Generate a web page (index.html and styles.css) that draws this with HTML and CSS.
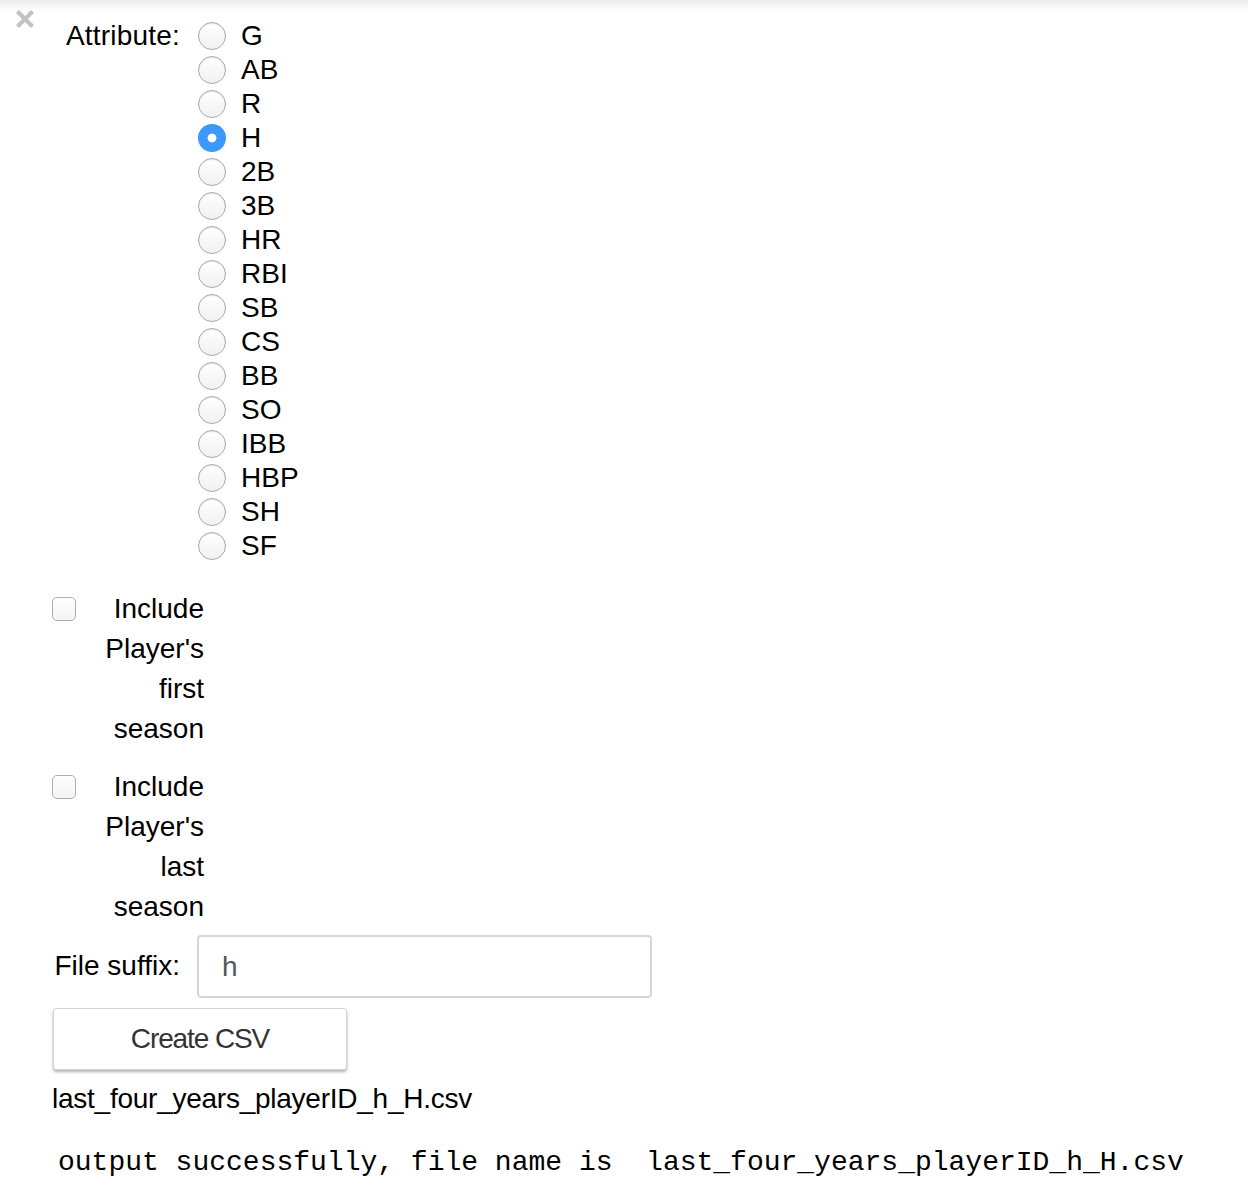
FILE: index.html
```html
<!DOCTYPE html>
<html>
<head>
<meta charset="utf-8">
<link rel="stylesheet" href="styles.css">
</head>
<body>
<div class="page">
  <div class="close-col">
    <svg class="close" width="20" height="20" viewBox="0 0 20 20"><path d="M2.5 2.5 L17.5 17.5 M17.5 2.5 L2.5 17.5" stroke="#c2c2c2" stroke-width="4.2" stroke-linecap="butt"/></svg>
  </div>
  <div class="widgets">
    <div class="field radio-field">
      <div class="label">Attribute:</div>
      <div class="radios">
        <label class="radio"><input type="radio" name="attr"><span>G</span></label>
        <label class="radio"><input type="radio" name="attr"><span>AB</span></label>
        <label class="radio"><input type="radio" name="attr"><span>R</span></label>
        <label class="radio"><input type="radio" name="attr" checked><span>H</span></label>
        <label class="radio"><input type="radio" name="attr"><span>2B</span></label>
        <label class="radio"><input type="radio" name="attr"><span>3B</span></label>
        <label class="radio"><input type="radio" name="attr"><span>HR</span></label>
        <label class="radio"><input type="radio" name="attr"><span>RBI</span></label>
        <label class="radio"><input type="radio" name="attr"><span>SB</span></label>
        <label class="radio"><input type="radio" name="attr"><span>CS</span></label>
        <label class="radio"><input type="radio" name="attr"><span>BB</span></label>
        <label class="radio"><input type="radio" name="attr"><span>SO</span></label>
        <label class="radio"><input type="radio" name="attr"><span>IBB</span></label>
        <label class="radio"><input type="radio" name="attr"><span>HBP</span></label>
        <label class="radio"><input type="radio" name="attr"><span>SH</span></label>
        <label class="radio"><input type="radio" name="attr"><span>SF</span></label>
      </div>
    </div>

    <label class="check check-first"><input type="checkbox"><span class="check-label">Include Player's first season</span></label>
    <label class="check check-last"><input type="checkbox"><span class="check-label">Include Player's last season</span></label>

    <div class="field text-field">
      <div class="label">File suffix:</div>
      <input class="text-input" type="text" value="h">
    </div>

    <button class="btn">Create CSV</button>

    <div class="result">last_four_years_playerID_h_H.csv</div>
    <pre class="stdout">output successfully, file name is  last_four_years_playerID_h_H.csv</pre>
  </div>
</div>
</body>
</html>
```

FILE: styles.css
```css
html, body {
  margin: 0;
  padding: 0;
  background: #fff;
}

body {
  font-family: "Liberation Sans", Arial, sans-serif;
  font-size: 28px;
  color: #000;
  width: 1248px;
  height: 1186px;
  overflow: hidden;
  background: linear-gradient(#ebebeb 0px, #f7f7f7 6px, #ffffff 14px) no-repeat;
  background-size: 100% 16px;
}

.page {
  display: flex;
  align-items: flex-start;
}

.close-col {
  width: 52px;
  flex: none;
}

.close {
  display: block;
  margin: 9px 0 0 15px;
}

.widgets {
  display: flex;
  flex-direction: column;
  align-items: flex-start;
}

.field {
  display: flex;
  align-items: flex-start;
}

.label {
  width: 128px;
  text-align: right;
  margin-right: 17px;
  line-height: 34px;
}

.radio-field {
  margin-top: 19px;
}

.radio-field .label {
  letter-spacing: 0.2px;
  margin-right: 18px;
}

.radios {
  display: flex;
  flex-direction: column;
}

.radio {
  display: flex;
  align-items: center;
  height: 34px;
  line-height: 34px;
}

.radio input {
  -webkit-appearance: none;
  appearance: none;
  width: 28px;
  height: 28px;
  margin: 0 15px 0 0;
  border-radius: 50%;
  border: 1px solid #a9a9a9;
  background: linear-gradient(#ffffff, #f1f1f1);
  box-shadow: inset 0 1px 1px rgba(0,0,0,0.1);
  box-sizing: border-box;
}

.radio input:checked {
  border: none;
  background: radial-gradient(circle, #ffffff 0, #ffffff 4px, #3b99fc 4.8px);
  box-shadow: none;
}

.check {
  display: flex;
  align-items: flex-start;
}

.check-first {
  margin-top: 25px;
}

.check-last {
  margin-top: 18px;
}

.check input {
  -webkit-appearance: none;
  appearance: none;
  width: 24px;
  height: 24px;
  margin: 9px 0 0 0;
  border: 1px solid #adadad;
  border-radius: 5px;
  background: linear-gradient(#ffffff, #f4f4f4);
  box-sizing: border-box;
  flex: none;
}

.check-label {
  width: 124px;
  margin: 1px 0 -1px 4px;
  text-align: right;
  line-height: 40px;
}

.text-field {
  margin-top: 9px;
}

.text-field .label {
  line-height: 62px;
}

.text-input {
  width: 455px;
  height: 63px;
  box-sizing: border-box;
  border: 2px solid #d6d6d6;
  border-radius: 4px;
  padding: 0 23px;
  font-family: "Liberation Sans", Arial, sans-serif;
  font-size: 28px;
  color: #555;
  background: #fff;
  outline: none;
}

.btn {
  margin: 10px 0 0 1px;
  width: 294px;
  height: 62px;
  border: 1px solid #d4d4d4;
  border-radius: 3px;
  background: #fff;
  box-shadow: 0 2px 3px rgba(0,0,0,0.3);
  font-family: "Liberation Sans", Arial, sans-serif;
  font-size: 28px;
  letter-spacing: -1.1px;
  color: #333;
  padding: 0;
}

.result {
  margin-top: 12px;
  line-height: 34px;
  letter-spacing: -0.25px;
}

.stdout {
  margin: 30px 0 0 6px;
  font-family: "Liberation Mono", "Courier New", monospace;
  font-size: 28px;
  line-height: 34px;
  color: #000;
}
```
